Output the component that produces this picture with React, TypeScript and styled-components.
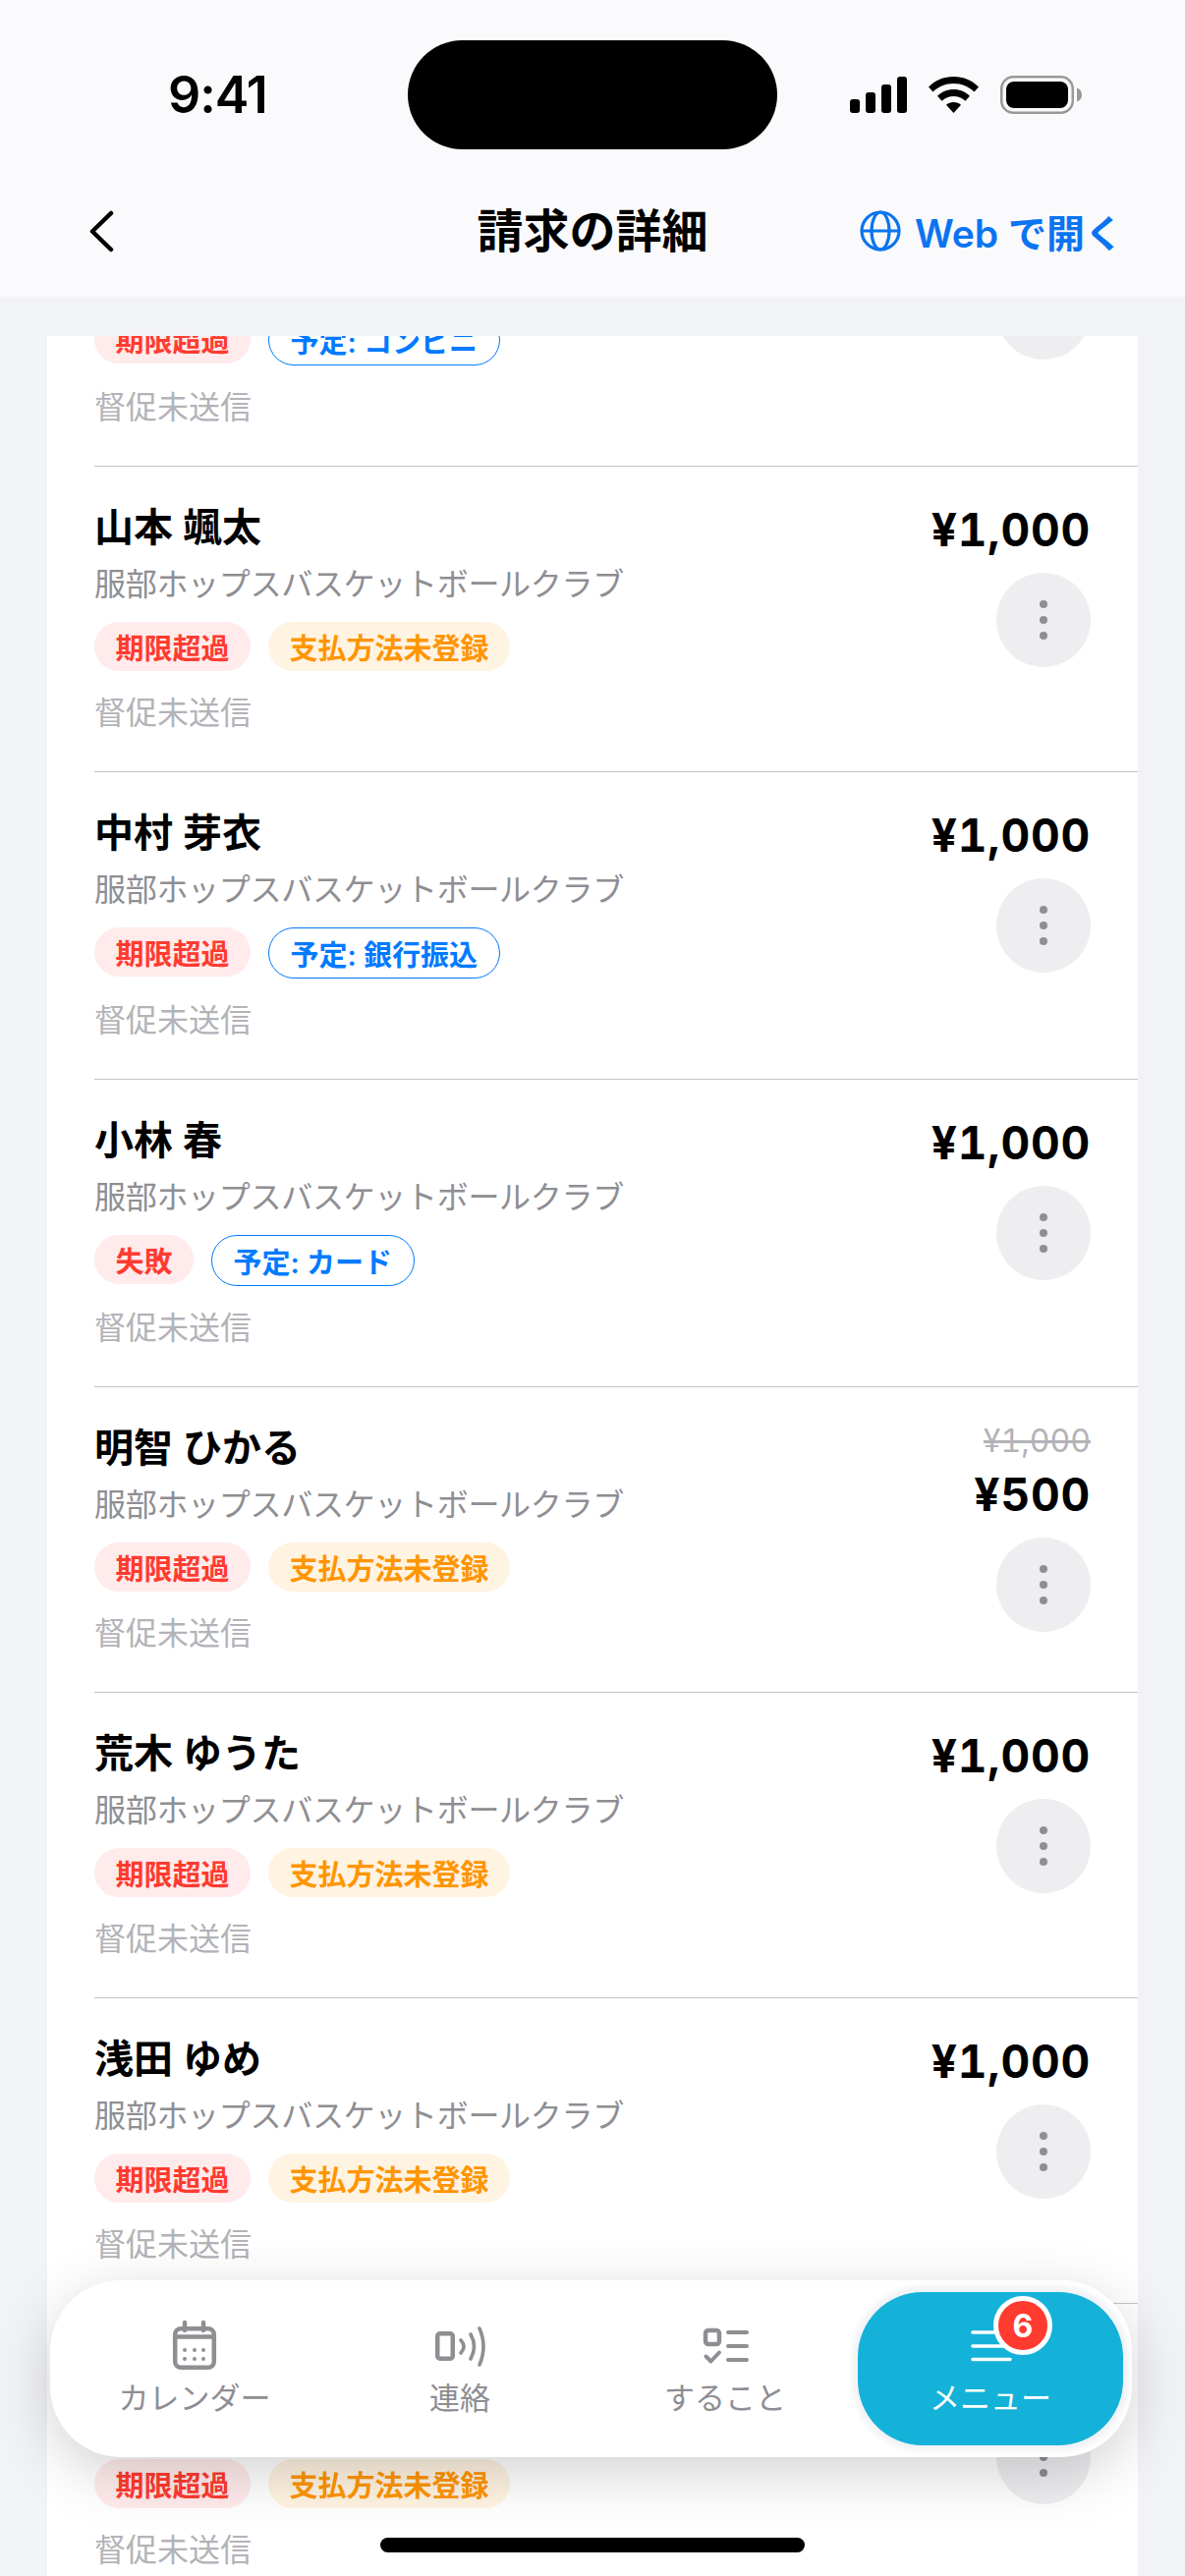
import styled, { createGlobalStyle } from 'styled-components'

const GlobalStyle = createGlobalStyle`
  html, body {
    margin: 0;
    padding: 0;
    background: #f2f3f7;
  }
  * {
    box-sizing: border-box;
  }
`

const FONT = `Inter, "Noto Sans CJK JP", sans-serif`

const Screen = styled.div`
  position: relative;
  display: flex;
  flex-direction: column;
  width: 1206px;
  height: 2622px;
  overflow: hidden;
  background: #f2f3f7;
  font-family: ${FONT};
  color: #000;
`

const Header = styled.header`
  flex: none;
  height: 302px;
  padding-top: 41px;
  background: #fafafd;
`

const StatusBar = styled.div`
  display: grid;
  grid-template-columns: 1fr 376px 1fr;
  align-items: center;
  height: 111px;
`

const Time = styled.div`
  padding-left: 171px;
  font-size: 52px;
  font-weight: 600;
  letter-spacing: -1px;
`

const Island = styled.div`
  height: 111px;
  border-radius: 56px;
  background: #000;
`

const StatusIcons = styled.div`
  display: flex;
  align-items: center;
  gap: 22px;
  padding-left: 74px;
`

const NavBar = styled.nav`
  display: grid;
  grid-template-columns: 1fr auto 1fr;
  align-items: center;
  height: 150px;
  padding: 16px 63px 0 63px;
`

const BackLink = styled.a`
  display: flex;
  margin-left: 25px;
`

const Title = styled.h1`
  margin: 0;
  font-size: 47px;
  line-height: 60px;
  font-weight: 700;
`

const WebLink = styled.a`
  display: flex;
  align-items: center;
  justify-content: flex-end;
  gap: 14px;
  font-size: 39px;
  font-weight: 600;
  color: #0b74f0;
`

const Scroller = styled.main`
  flex: 1;
  min-height: 0;
  margin-top: 40px;
  overflow: hidden;
`

const Card = styled.div`
  margin: -181px 48px 0;
  background: #fff;
`

const Row = styled.div`
  display: flex;
  justify-content: space-between;
  margin-left: 48px;
  padding: 38px 48px 39px 0;
  border-top: 1px solid #c4c4c8;
`

const Info = styled.div`
  display: flex;
  flex-direction: column;
  align-items: flex-start;
`

const Name = styled.div`
  font-size: 40px;
  line-height: 48px;
  font-weight: 600;
`

const Team = styled.div`
  margin-top: 14px;
  font-size: 32px;
  line-height: 40px;
  letter-spacing: -0.3px;
  color: #8e8e93;
`

const Tags = styled.div`
  display: flex;
  gap: 18px;
  margin-top: 18px;
`

type TagKind = 'danger' | 'warn' | 'plan'

const TAG_COLORS: Record<TagKind, { bg: string; fg: string; line: string }> = {
  danger: { bg: '#ffebec', fg: '#ff3b30', line: 'transparent' },
  warn: { bg: '#fff3e1', fg: '#ff9500', line: 'transparent' },
  plan: { bg: '#fff', fg: '#007aff', line: '#007aff' },
}

const Tag = styled.span<{ $kind: TagKind }>`
  display: flex;
  align-items: center;
  height: ${(p) => (p.$kind === 'plan' ? 52 : 50)}px;
  padding: 0 ${(p) => (p.$kind === 'plan' ? 21.5 : 20.5)}px;
  border: 1px solid ${(p) => TAG_COLORS[p.$kind].line};
  border-radius: 26px;
  background: ${(p) => TAG_COLORS[p.$kind].bg};
  color: ${(p) => TAG_COLORS[p.$kind].fg};
  font-size: 29px;
  font-weight: 600;
`

const Reminder = styled.div`
  margin-top: 23px;
  font-size: 32px;
  line-height: 40px;
  color: #b3b3b8;
`

const Side = styled.div`
  display: flex;
  flex-direction: column;
  align-items: flex-end;
`

const OldPrice = styled.div`
  margin-bottom: 11px;
  font-size: 32px;
  line-height: 34px;
  font-feature-settings: 'tnum';
  color: #b3b3b8;
  text-decoration: line-through;
`

const Price = styled.div`
  font-size: 46px;
  line-height: 52px;
  font-weight: 700;
  letter-spacing: 0.8px;
  font-feature-settings: 'tnum';
`

const MoreButton = styled.button`
  display: flex;
  flex-direction: column;
  align-items: center;
  justify-content: center;
  gap: 7.5px;
  width: 96px;
  height: 96px;
  margin-top: 18px;
  padding: 0;
  border: 0;
  border-radius: 50%;
  background: #eeeef1;
`

const Dot = styled.i`
  width: 8.5px;
  height: 8.5px;
  border-radius: 50%;
  background: #8e8e93;
`

const TabBar = styled.div`
  position: absolute;
  left: 51px;
  bottom: 121px;
  display: grid;
  grid-template-columns: repeat(4, 1fr);
  width: 1101px;
  height: 180px;
  padding: 12px 9px 12px 12px;
  border-radius: 72px;
  background: #fff;
  box-shadow: 0 16px 60px rgba(0, 0, 0, 0.18);
`

const Tab = styled.div<{ $active?: boolean }>`
  position: relative;
  display: flex;
  flex-direction: column;
  align-items: center;
  padding-top: 28px;
  border-radius: 66px;
  background: ${(p) => (p.$active ? '#14b2d9' : 'transparent')};
  color: ${(p) => (p.$active ? '#fff' : '#8e8e93')};
  box-shadow: ${(p) => (p.$active ? '0 0 6px 6px #f1f2f6' : 'none')};
`

const TabLabel = styled.span`
  margin-top: 10px;
  font-size: 31px;
  line-height: 36px;
`

const Badge = styled.span`
  position: absolute;
  left: 138px;
  top: 4px;
  display: flex;
  align-items: center;
  justify-content: center;
  width: 60px;
  height: 60px;
  border: 5px solid #fff;
  border-radius: 50%;
  background: #ff3b30;
  color: #fff;
  font-size: 32px;
  font-weight: 700;
`

const HomeIndicator = styled.div`
  position: absolute;
  left: 387px;
  bottom: 24px;
  width: 432px;
  height: 15px;
  border-radius: 8px;
  background: #000;
`

function SignalIcon() {
  return (
    <svg width="58" height="37" viewBox="0 0 58 37" fill="#000">
      <rect x="0" y="23" width="10" height="14" rx="3" />
      <rect x="16" y="16" width="10" height="21" rx="3" />
      <rect x="32" y="8" width="10" height="29" rx="3" />
      <rect x="48" y="0" width="10" height="37" rx="3" />
    </svg>
  )
}

function WifiIcon() {
  return (
    <svg width="51" height="37" viewBox="0 0 51 37" fill="#000">
      <path d="M25.5 0C35.5 0 44.5 4 51 10.5L46.5 15.5C41 10.2 33.7 7 25.5 7S10 10.2 4.5 15.5L0 10.5C6.5 4 15.5 0 25.5 0Z" />
      <path d="M25.5 13C32 13 37.8 15.5 42 19.7L37.4 24.7C34.3 21.8 30.1 20 25.5 20S16.7 21.8 13.6 24.7L9 19.7C13.2 15.5 19 13 25.5 13Z" />
      <path d="M25.5 26C28.4 26 31 27 33 28.8L25.5 37L18 28.8C20 27 22.6 26 25.5 26Z" />
    </svg>
  )
}

function BatteryIcon() {
  return (
    <svg width="83" height="39" viewBox="0 0 83 39">
      <rect x="1.25" y="1.25" width="72.5" height="36.5" rx="12" fill="none" stroke="#999" strokeWidth="2.5" />
      <rect x="6" y="6" width="63" height="27" rx="8" fill="#000" />
      <path d="M78 12.5C81 13.5 83 16 83 19.5S81 25.5 78 26.5Z" fill="#999" />
    </svg>
  )
}

function BackIcon() {
  return (
    <svg width="30" height="44" viewBox="0 0 30 44" fill="none" stroke="#000" strokeWidth="4.5" strokeLinecap="round" strokeLinejoin="round">
      <path d="M25 4L6 22.5L25 41" />
    </svg>
  )
}

function GlobeIcon() {
  return (
    <svg width="42" height="42" viewBox="0 0 42 42" fill="none" stroke="#0b74f0" strokeWidth="3.2">
      <circle cx="21" cy="21" r="19" />
      <ellipse cx="21" cy="21" rx="9" ry="19" />
      <path d="M2 21H40" />
    </svg>
  )
}

function CalendarIcon() {
  return (
    <svg width="52" height="52" viewBox="0 0 52 52" fill="none" stroke="currentColor" strokeWidth="4.5" strokeLinecap="round">
      <rect x="6.2" y="9.2" width="39.6" height="39.6" rx="6" />
      <path d="M6 17.5H46M16 3V11M35 3V11" />
      <g fill="currentColor" stroke="none">
        <circle cx="16" cy="31" r="2" />
        <circle cx="26" cy="31" r="2" />
        <circle cx="35" cy="31" r="2" />
        <circle cx="16" cy="40" r="2" />
        <circle cx="26" cy="40" r="2" />
        <circle cx="35" cy="40" r="2" />
      </g>
    </svg>
  )
}

function ContactIcon() {
  return (
    <svg width="52" height="52" viewBox="0 0 52 52" fill="none" stroke="currentColor" strokeWidth="3.6" strokeLinecap="round">
      <rect x="3.25" y="14.25" width="15.5" height="25.5" rx="2.5" strokeWidth="4.5" />
      <path d="M27 21Q33 27.5 27 34M37 15Q44 27.5 37 40M46 9Q54 27.5 46 46" />
    </svg>
  )
}

function TodoIcon() {
  return (
    <svg width="52" height="52" viewBox="0 0 52 52" fill="none" stroke="currentColor" strokeWidth="4" strokeLinecap="round" strokeLinejoin="round">
      <rect x="6" y="11" width="14" height="14" rx="3" strokeWidth="4.5" />
      <path d="M6.5 37.5L11.5 42.5L20 33.5M29 13H48M29 27H48M29 41H48" />
    </svg>
  )
}

function MenuIcon() {
  return (
    <svg width="52" height="52" viewBox="0 0 52 52" fill="none" stroke="currentColor" strokeWidth="3.6" strokeLinecap="round">
      <path d="M8 13H46M8 27H46M8 40.5H46" />
    </svg>
  )
}

const OVERDUE = { kind: 'danger', label: '期限超過' } as const
const NO_METHOD = { kind: 'warn', label: '支払方法未登録' } as const

interface Member {
  name: string
  price: string
  oldPrice?: string
  tags: ReadonlyArray<{ kind: TagKind; label: string }>
}

const MEMBERS: Member[] = [
  { name: '佐藤 健', price: '¥1,000', tags: [OVERDUE, { kind: 'plan', label: '予定: コンビニ' }] },
  { name: '山本 颯太', price: '¥1,000', tags: [OVERDUE, NO_METHOD] },
  { name: '中村 芽衣', price: '¥1,000', tags: [OVERDUE, { kind: 'plan', label: '予定: 銀行振込' }] },
  { name: '小林 春', price: '¥1,000', tags: [{ kind: 'danger', label: '失敗' }, { kind: 'plan', label: '予定: カード' }] },
  { name: '明智 ひかる', price: '¥500', oldPrice: '¥1,000', tags: [OVERDUE, NO_METHOD] },
  { name: '荒木 ゆうた', price: '¥1,000', tags: [OVERDUE, NO_METHOD] },
  { name: '浅田 ゆめ', price: '¥1,000', tags: [OVERDUE, NO_METHOD] },
  { name: '松本 大地', price: '¥1,000', tags: [OVERDUE, NO_METHOD] },
]

export default function App() {
  return (
    <Screen>
      <GlobalStyle />
      <Header>
        <StatusBar>
          <Time>9:41</Time>
          <Island />
          <StatusIcons>
            <SignalIcon />
            <WifiIcon />
            <BatteryIcon />
          </StatusIcons>
        </StatusBar>
        <NavBar>
          <BackLink>
            <BackIcon />
          </BackLink>
          <Title>請求の詳細</Title>
          <WebLink>
            <GlobeIcon />
            Web で開く
          </WebLink>
        </NavBar>
      </Header>
      <Scroller>
        <Card>
          {MEMBERS.map((m) => (
            <Row key={m.name}>
              <Info>
                <Name>{m.name}</Name>
                <Team>服部ホップスバスケットボールクラブ</Team>
                <Tags>
                  {m.tags.map((t) => (
                    <Tag key={t.label} $kind={t.kind}>
                      {t.label}
                    </Tag>
                  ))}
                </Tags>
                <Reminder>督促未送信</Reminder>
              </Info>
              <Side>
                {m.oldPrice && <OldPrice>{m.oldPrice}</OldPrice>}
                <Price>{m.price}</Price>
                <MoreButton>
                  <Dot />
                  <Dot />
                  <Dot />
                </MoreButton>
              </Side>
            </Row>
          ))}
        </Card>
      </Scroller>
      <TabBar>
        <Tab>
          <CalendarIcon />
          <TabLabel>カレンダー</TabLabel>
        </Tab>
        <Tab>
          <ContactIcon />
          <TabLabel>連絡</TabLabel>
        </Tab>
        <Tab>
          <TodoIcon />
          <TabLabel>すること</TabLabel>
        </Tab>
        <Tab $active>
          <MenuIcon />
          <TabLabel>メニュー</TabLabel>
          <Badge>6</Badge>
        </Tab>
      </TabBar>
      <HomeIndicator />
    </Screen>
  )
}
